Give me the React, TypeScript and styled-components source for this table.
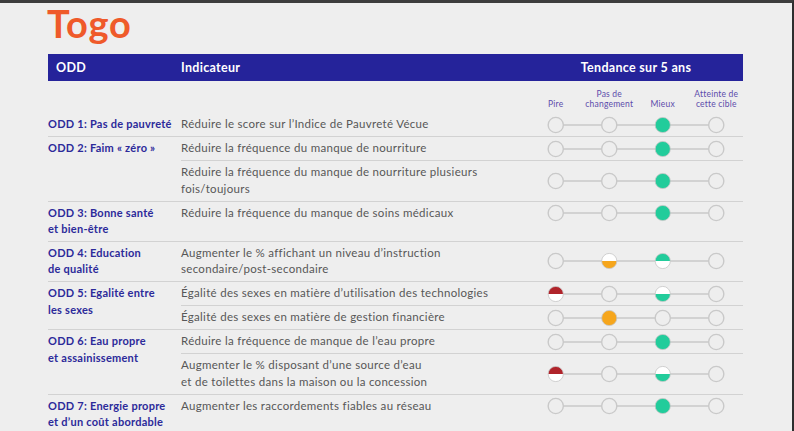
import React from 'react';
import styled, { createGlobalStyle } from 'styled-components';

const GlobalStyle = createGlobalStyle`
  html, body { margin: 0; padding: 0; background: #eeeeee; }
  body { font-family: 'Lato', 'Open Sans', sans-serif; }
`;

const COLORS = {
  G: '#22cc9b',
  O: '#f6a61c',
  R: '#b0242b',
};

const Frame = styled.div`
  width: 794px;
  height: 431px;
  box-sizing: border-box;
  overflow: hidden;
  background: #eeeeee;
  border-top: 3px solid #3d3d3d;
  border-right: 2px solid #2e2e2e;
  padding-left: 47px;
`;

const Title = styled.h1`
  margin: 2px 0 12px;
  font-family: 'Lato', sans-serif;
  font-weight: 700;
  font-size: 38px;
  line-height: 37px;
  letter-spacing: 0.8px;
  color: #ef5a2a;
`;

const Table = styled.div`
  width: 695px;
  margin-left: 1px;
`;

const HeaderBar = styled.div`
  display: grid;
  grid-template-columns: 133px 348px 214px;
  height: 27px;
  align-items: center;
  background: #25239a;
  color: #ffffff;
  font-weight: 700;
  font-size: 12.5px;
  letter-spacing: 0.3px;
`;

const HeaderCell = styled.div<{ $center?: boolean; $pad?: number }>`
  padding-left: ${(p) => p.$pad ?? 0}px;
  text-align: ${(p) => (p.$center ? 'center' : 'left')};
`;

const SubHeader = styled.div`
  display: grid;
  grid-template-columns: 481px 214px;
  height: 32px;
  box-sizing: border-box;
  padding-bottom: 4px;
`;

const Scale = styled.div`
  grid-column: 2;
  display: grid;
  grid-template-columns: repeat(4, 1fr);
  align-items: end;
`;

const ScaleLabel = styled.div`
  text-align: center;
  font-size: 8.5px;
  line-height: 9.5px;
  letter-spacing: 0.2px;
  color: #5c4bab;
`;

const Group = styled.div<{ $first?: boolean }>`
  display: grid;
  grid-template-columns: 133px 562px;
  border-top: ${(p) => (p.$first ? 'none' : '1px solid #d2d2d2')};
`;

const GoalLabel = styled.div`
  padding: 3px 0;
  font-weight: 700;
  font-size: 11px;
  line-height: 16.5px;
  letter-spacing: 0.25px;
  color: #2c2a9a;
  white-space: nowrap;
`;

const Rows = styled.div`
  display: flex;
  flex-direction: column;
`;

const Row = styled.div<{ $first?: boolean }>`
  display: grid;
  grid-template-columns: 348px 214px;
  align-items: center;
  border-top: ${(p) => (p.$first ? 'none' : '1px solid #d2d2d2')};
`;

const Indicator = styled.div`
  padding: 3px 0 3.5px;
  font-size: 11.5px;
  line-height: 16.5px;
  letter-spacing: 0.3px;
  color: #575757;
  white-space: nowrap;
`;

type Dot = '' | 'G' | 'O' | 'R' | 'Gt' | 'Gb' | 'Ot' | 'Ob' | 'Rt' | 'Rb';

const CX = [26.75, 80.25, 133.75, 187.25];
const R = 7.6;
const CY = 9;

function half(cx: number, top: boolean) {
  return top
    ? `M ${cx - R} ${CY} A ${R} ${R} 0 0 1 ${cx + R} ${CY} Z`
    : `M ${cx - R} ${CY} A ${R} ${R} 0 0 0 ${cx + R} ${CY} Z`;
}

const TrackSvg = styled.svg`
  display: block;
`;

function Track({ dots }: { dots: Dot[] }) {
  return (
    <TrackSvg width="214" height="18" viewBox="0 0 214 18">
      <line x1={CX[0]} y1={CY} x2={CX[3]} y2={CY} stroke="#c9c9c9" strokeWidth="1.4" />
      {dots.map((d, i) => {
        const cx = CX[i];
        if (d === '') {
          return <circle key={i} cx={cx} cy={CY} r={R} fill="#eeeeee" stroke="#c9c9c9" strokeWidth="1.4" />;
        }
        const color = COLORS[d[0] as 'G' | 'O' | 'R'];
        if (d.length === 1) {
          return <circle key={i} cx={cx} cy={CY} r={R} fill={color} stroke="#c6c6c6" strokeWidth="0.8" />;
        }
        return (
          <g key={i}>
            <circle cx={cx} cy={CY} r={R} fill="#ffffff" />
            <path d={half(cx, d[1] === 't')} fill={color} />
            <circle cx={cx} cy={CY} r={R} fill="none" stroke="#c6c6c6" strokeWidth="0.8" />
          </g>
        );
      })}
    </TrackSvg>
  );
}

type Item = { text: string[]; dots: Dot[] };
type Goal = { label: string[]; items: Item[] };

const DATA: Goal[] = [
  {
    label: ['ODD 1: Pas de pauvreté'],
    items: [{ text: ['Réduire le score sur l’Indice de Pauvreté Vécue'], dots: ['', '', 'G', ''] }],
  },
  {
    label: ['ODD 2: Faim « zéro »'],
    items: [
      { text: ['Réduire la fréquence du manque de nourriture'], dots: ['', '', 'G', ''] },
      {
        text: ['Réduire la fréquence du manque de nourriture plusieurs', 'fois/toujours'],
        dots: ['', '', 'G', ''],
      },
    ],
  },
  {
    label: ['ODD 3: Bonne santé', 'et bien-être'],
    items: [{ text: ['Réduire la fréquence du manque de soins médicaux'], dots: ['', '', 'G', ''] }],
  },
  {
    label: ['ODD 4: Education', 'de qualité'],
    items: [
      {
        text: ['Augmenter le % affichant un niveau d’instruction', 'secondaire/post-secondaire'],
        dots: ['', 'Ob', 'Gt', ''],
      },
    ],
  },
  {
    label: ['ODD 5: Egalité entre', 'les sexes'],
    items: [
      { text: ['Égalité des sexes en matière d’utilisation des technologies'], dots: ['Rt', '', 'Gb', ''] },
      { text: ['Égalité des sexes en matière de gestion financière'], dots: ['', 'O', '', ''] },
    ],
  },
  {
    label: ['ODD 6: Eau propre', 'et assainissement'],
    items: [
      { text: ['Réduire la fréquence de manque de l’eau propre'], dots: ['', '', 'G', ''] },
      {
        text: ['Augmenter le % disposant d’une source d’eau', 'et de toilettes dans la maison ou la concession'],
        dots: ['Rt', '', 'Gb', ''],
      },
    ],
  },
  {
    label: ['ODD 7: Energie propre', 'et d’un coût abordable'],
    items: [{ text: ['Augmenter les raccordements fiables au réseau'], dots: ['', '', 'G', ''] }],
  },
];

function Lines({ lines }: { lines: string[] }) {
  return (
    <>
      {lines.map((l, i) => (
        <React.Fragment key={i}>
          {i > 0 && <br />}
          {l}
        </React.Fragment>
      ))}
    </>
  );
}

export default function App() {
  return (
    <>
      <GlobalStyle />
      <Frame>
        <Title>Togo</Title>
        <Table>
          <HeaderBar>
            <HeaderCell $pad={8}>ODD</HeaderCell>
            <HeaderCell>Indicateur</HeaderCell>
            <HeaderCell $center>Tendance sur 5 ans</HeaderCell>
          </HeaderBar>
          <SubHeader>
            <Scale>
              <ScaleLabel>Pire</ScaleLabel>
              <ScaleLabel>
                Pas de
                <br />
                changement
              </ScaleLabel>
              <ScaleLabel>Mieux</ScaleLabel>
              <ScaleLabel>
                Atteinte de
                <br />
                cette cible
              </ScaleLabel>
            </Scale>
          </SubHeader>
          {DATA.map((g, gi) => (
            <Group key={gi} $first={gi === 0}>
              <GoalLabel>
                <Lines lines={g.label} />
              </GoalLabel>
              <Rows>
                {g.items.map((it, ii) => (
                  <Row key={ii} $first={ii === 0}>
                    <Indicator>
                      <Lines lines={it.text} />
                    </Indicator>
                    <Track dots={it.dots} />
                  </Row>
                ))}
              </Rows>
            </Group>
          ))}
        </Table>
      </Frame>
    </>
  );
}
